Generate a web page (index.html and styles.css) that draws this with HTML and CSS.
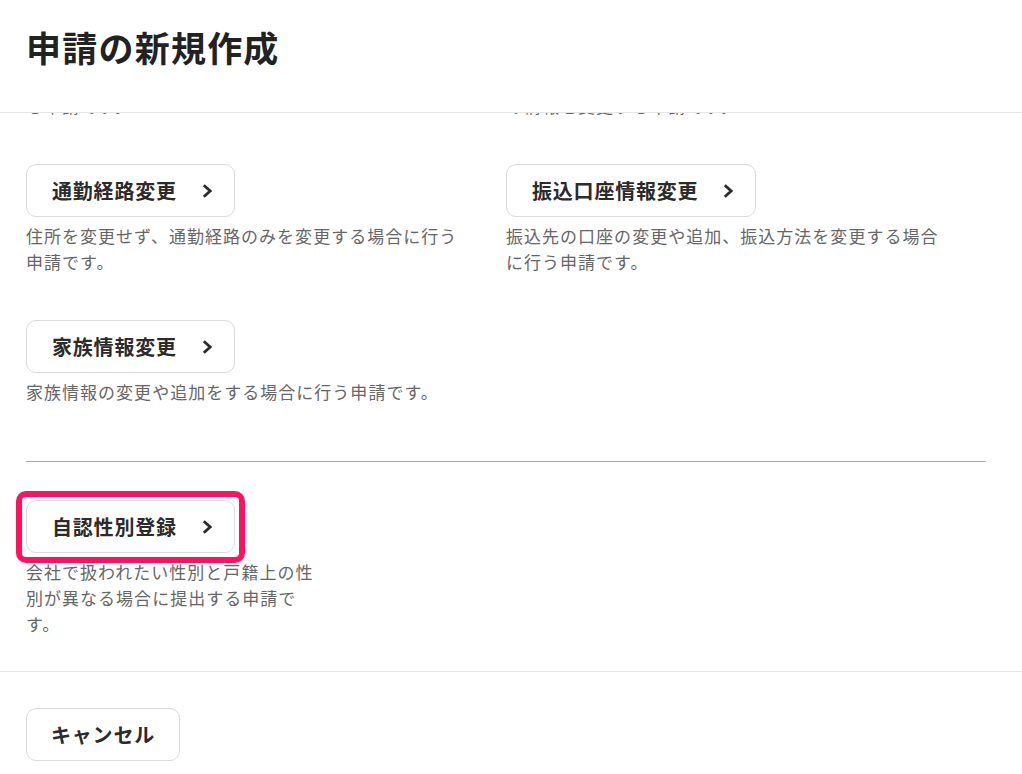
FILE: index.html
```html
<!DOCTYPE html>
<html lang="ja">
<head>
  <meta charset="utf-8">
  <title>申請の新規作成</title>
  <link rel="stylesheet" href="styles.css">
</head>
<body>
  <div class="dialog">
    <header class="dialog-header">
      <h1>申請の新規作成</h1>
    </header>

    <div class="dialog-body" id="dialog-body">
      <div class="item-grid">
        <div class="item">
          <a class="item-button" href="#">住所変更<svg class="chevron" viewBox="0 0 10 14"><path d="M1.8 1.2 L8.2 7 L1.8 12.8"/></svg></a>
          <p class="item-desc">住所が変わって、通勤経路も変更となる場合に提出する申請です。</p>
        </div>
        <div class="item">
          <a class="item-button" href="#">氏名変更<svg class="chevron" viewBox="0 0 10 14"><path d="M1.8 1.2 L8.2 7 L1.8 12.8"/></svg></a>
          <p class="item-desc">結婚などで氏名が変わった場合に、戸籍上の氏名などの情報を変更する申請です。</p>
        </div>

        <div class="item">
          <a class="item-button" href="#">通勤経路変更<svg class="chevron" viewBox="0 0 10 14"><path d="M1.8 1.2 L8.2 7 L1.8 12.8"/></svg></a>
          <p class="item-desc">住所を変更せず、通勤経路のみを変更する場合に行う申請です。</p>
        </div>
        <div class="item">
          <a class="item-button" href="#">振込口座情報変更<svg class="chevron" viewBox="0 0 10 14"><path d="M1.8 1.2 L8.2 7 L1.8 12.8"/></svg></a>
          <p class="item-desc">振込先の口座の変更や追加、振込方法を変更する場合に行う申請です。</p>
        </div>

        <div class="item">
          <a class="item-button" href="#">家族情報変更<svg class="chevron" viewBox="0 0 10 14"><path d="M1.8 1.2 L8.2 7 L1.8 12.8"/></svg></a>
          <p class="item-desc">家族情報の変更や追加をする場合に行う申請です。</p>
        </div>
      </div>

      <hr class="divider">

      <div class="item">
        <div class="highlight">
          <a class="item-button" href="#">自認性別登録<svg class="chevron" viewBox="0 0 10 14"><path d="M1.8 1.2 L8.2 7 L1.8 12.8"/></svg></a>
        </div>
        <p class="item-desc narrow">会社で扱われたい性別と戸籍上の性別が異なる場合に提出する申請です。</p>
      </div>
    </div>

    <footer class="dialog-footer">
      <button class="cancel-button" type="button">キャンセル</button>
    </footer>
  </div>

  <script>
    // keep the list scrolled to its last entry
    const body = document.getElementById('dialog-body');
    body.scrollTop = body.scrollHeight;
  </script>
</body>
</html>
```

FILE: styles.css
```css
html, body {
  margin: 0;
  height: 100%;
  overflow: hidden;
}

body {
  font-family: "Noto Sans CJK JP", "Noto Sans", sans-serif;
  background-color: #fff;
  color: #333;
}

.dialog {
  display: flex;
  flex-direction: column;
}

.dialog-header {
  position: relative;
  z-index: 1;
  height: 113px;
  box-sizing: border-box;
  padding: 22px 26px 0;
  border-bottom: 1px solid #e6e6e6;
  background-color: #fff;
}

.dialog-header h1 {
  margin: 0;
  font-size: 35px;
  line-height: 1.4;
  font-weight: 700;
  letter-spacing: 0.035em;
  color: #222;
}

.dialog-body {
  height: 558px;
  overflow: hidden;
  padding: 40px 36px 34px 26px;
  box-sizing: border-box;
}

.item-grid {
  display: grid;
  grid-template-columns: repeat(2, 440px);
  column-gap: 40px;
  row-gap: 45px;
}

.item-button {
  display: inline-flex;
  align-items: center;
  gap: 25px;
  height: 53px;
  box-sizing: border-box;
  padding: 0 22px 0 25px;
  border: 1px solid #dadada;
  border-radius: 10px;
  background-color: #fff;
  color: #2b2b2b;
  font-size: 20px;
  font-weight: 700;
  letter-spacing: 0.04em;
  text-decoration: none;
}

.chevron {
  width: 10px;
  height: 14px;
  fill: none;
  stroke: #2b2b2b;
  stroke-width: 2.8;
}

.item-desc {
  margin: 6px 0 0;
  font-size: 17px;
  line-height: 26px;
  letter-spacing: 0.06em;
  color: #666;
}

.item-desc.narrow {
  max-width: 300px;
}

.divider {
  margin: 56px 0 38px;
  border: 0;
  border-top: 1px solid #ababab;
}

/* pink ring drawn over the selected entry */
.highlight {
  position: relative;
  display: inline-block;
  vertical-align: top;
}

.highlight .item-button {
  vertical-align: top;
}

.highlight::after {
  content: "";
  position: absolute;
  inset: -9px -10px -10px -10px;
  border: 6px solid #ff1160;
  border-radius: 10px;
}

.dialog-footer {
  border-top: 1px solid #e6e6e6;
  padding: 36px 26px;
}

.cancel-button {
  height: 53px;
  padding: 0 24px;
  border: 1px solid #dadada;
  border-radius: 10px;
  background-color: #fff;
  color: #2b2b2b;
  font-family: inherit;
  font-size: 20px;
  font-weight: 700;
  letter-spacing: 0.04em;
}
```
